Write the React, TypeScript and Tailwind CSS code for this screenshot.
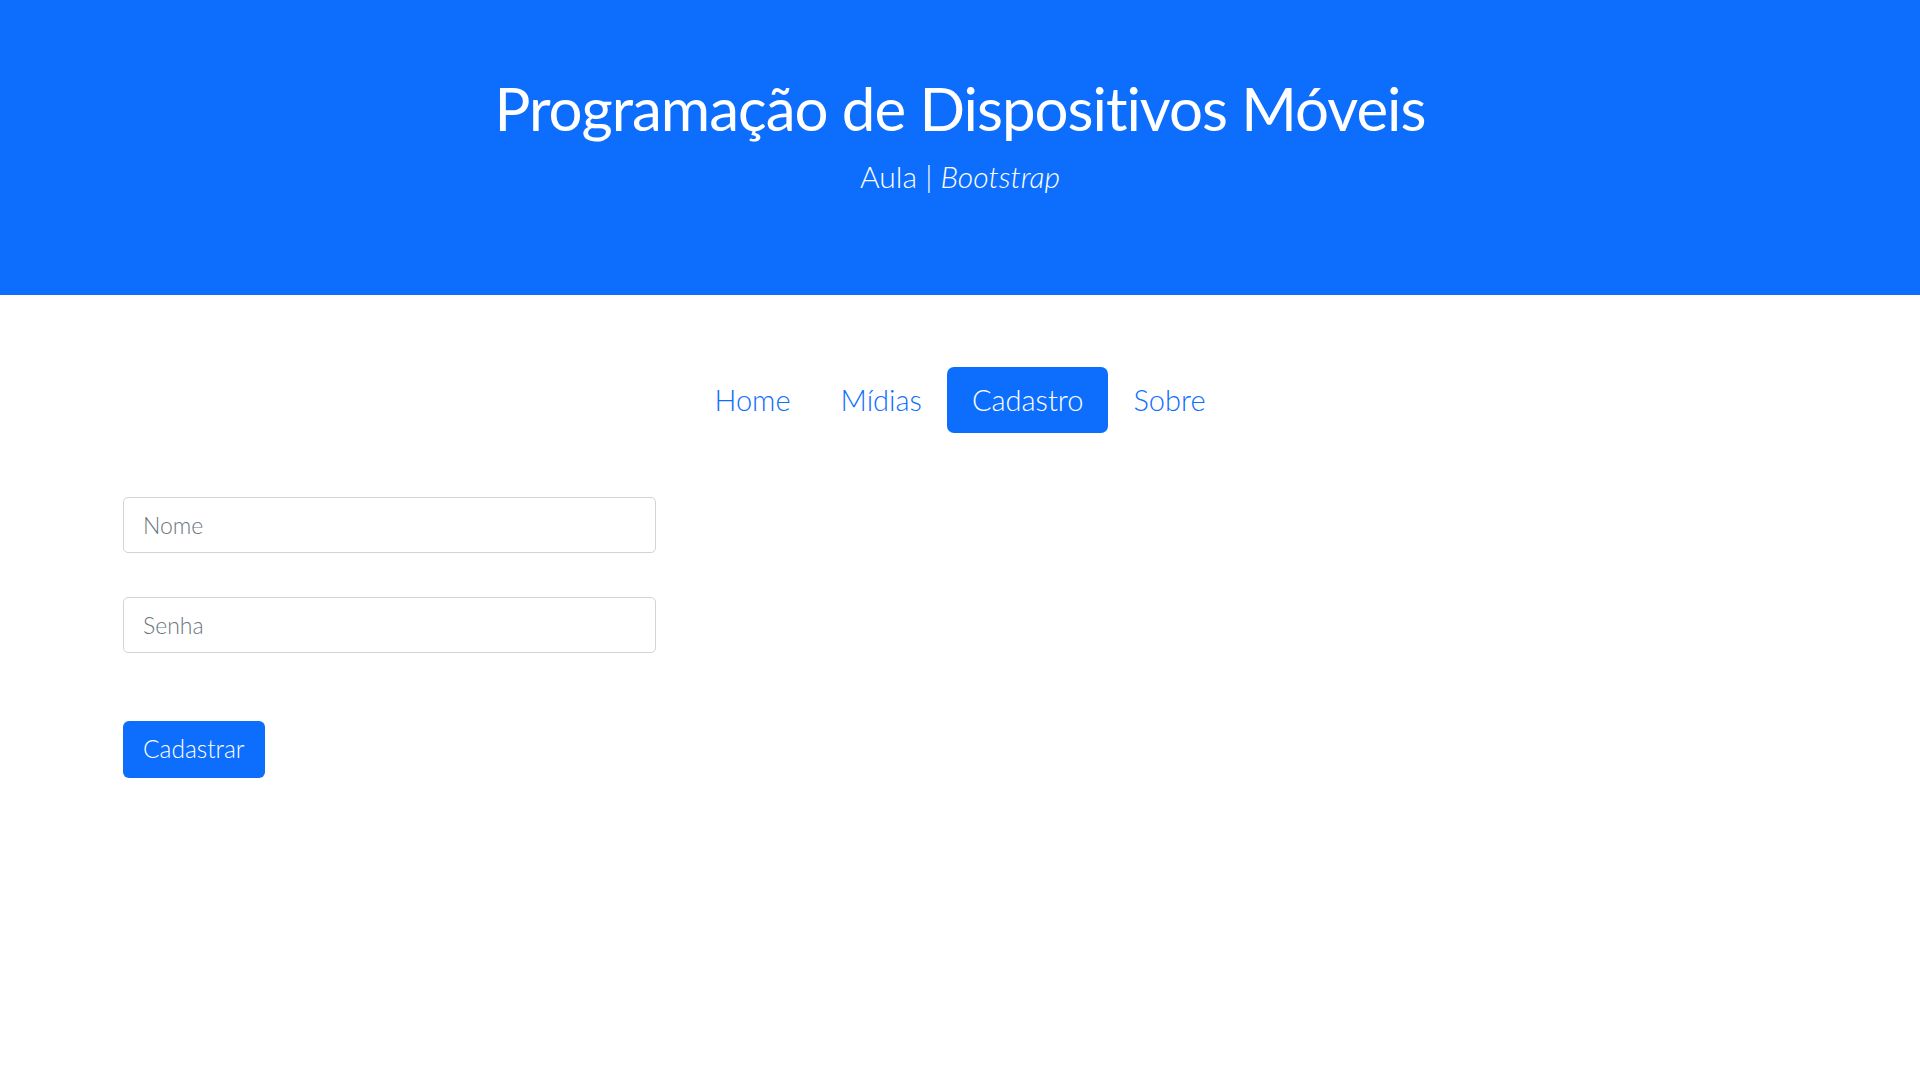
import { useState } from "react"

const links = ["Home", "Mídias", "Cadastro", "Sobre"]

export default function App() {
  const [active, setActive] = useState("Cadastro")
  return (
    <main className="min-h-screen bg-white font-['Lato',sans-serif] [font-variant-ligatures:none]">
      <header className="bg-[#0d6efd] text-white h-[295px] flex flex-col items-center pt-[72px]">
        <h1 className="text-[60px] leading-[72px] font-normal tracking-[-1px]">Programação de Dispositivos Móveis</h1>
        <p className="text-[30px] leading-[45px] font-light mt-[10px]">
          Aula | <em>Bootstrap</em>
        </p>
      </header>

      <nav className="flex justify-center mt-[72px]">
        <ul className="flex">
          {links.map((l) => (
            <li key={l}>
              <a
                href="#"
                onClick={(e) => {
                  e.preventDefault()
                  setActive(l)
                }}
                className={
                  l === active
                    ? "block px-[25px] py-[10px] text-[29px] leading-[46px] font-light rounded-[7px] bg-[#0d6efd] text-white"
                    : "block px-[25px] py-[10px] text-[29px] leading-[46px] font-light rounded-[7px] text-[#0d6efd]"
                }
              >
                {l}
              </a>
            </li>
          ))}
        </ul>
      </nav>

      <form className="flex flex-col items-start pl-[123px] mt-[64px]" onSubmit={(e) => e.preventDefault()}>
        <input
          type="text"
          placeholder="Nome"
          className="w-[533px] h-[56px] border border-[#ced4da] rounded-[5px] px-[19px] text-[23px] font-light text-[#212529] placeholder:text-[#6c757d] outline-none"
        />
        <input
          type="password"
          placeholder="Senha"
          className="w-[533px] h-[56px] border border-[#ced4da] rounded-[5px] px-[19px] text-[23px] font-light text-[#212529] placeholder:text-[#6c757d] outline-none mt-[44px]"
        />
        <button
          type="submit"
          className="mt-[68px] h-[57px] px-[20px] rounded-[6px] bg-[#0d6efd] text-white text-[24.5px] font-light"
        >
          Cadastrar
        </button>
      </form>
    </main>
  )
}
